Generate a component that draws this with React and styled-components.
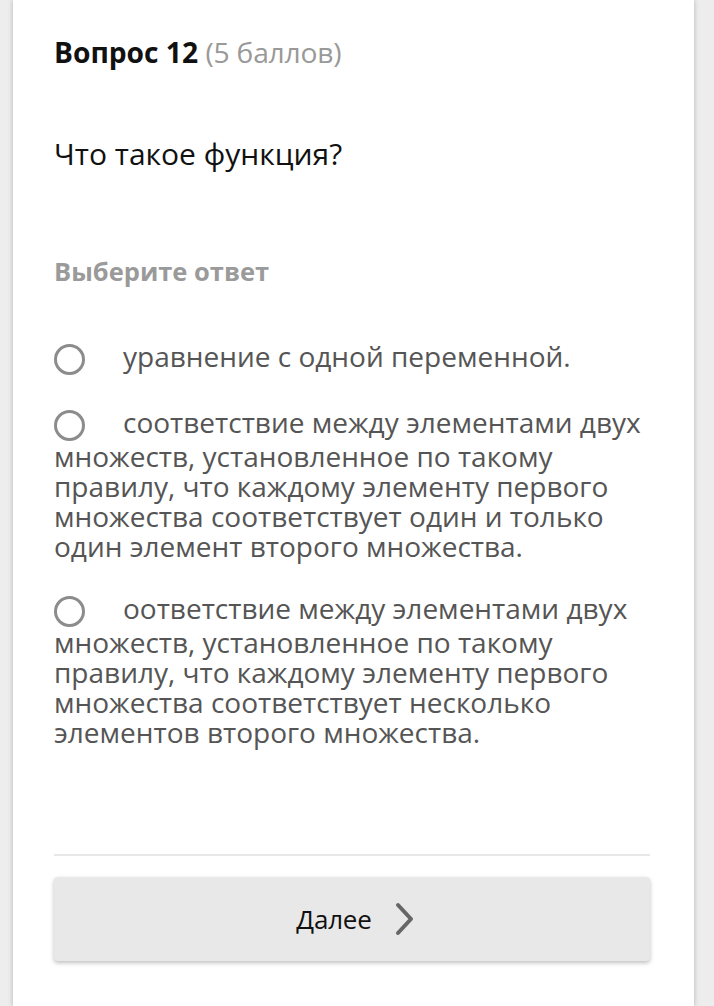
import React from "react";
import styled, { createGlobalStyle } from "styled-components";

const Global = createGlobalStyle`
  html, body { margin: 0; padding: 0; background: #ededed; }
  body { font-family: "Open Sans", "Noto Sans", sans-serif; }
`;

const Page = styled.div`
  display: flex;
  justify-content: flex-start;
  min-height: 1006px;
  padding-left: 13px;
`;

const Card = styled.div`
  width: 681px;
  background: #fff;
  box-shadow: 0 0 5px rgba(0,0,0,0.25);
  padding: 30px 44px 40px 41px;
  box-sizing: border-box;
  min-height: 1006px;
`;

const Title = styled.h2`
  margin: 0;
  font-size: 28.2px;
  font-weight: 700;
  color: #111;
  line-height: 44px;
`;

const Points = styled.span`
  font-weight: 400;
  color: #999;
  letter-spacing: -0.2px;
`;

const Question = styled.p`
  margin: 58px 0 0;
  font-size: 30px;
  color: #111;
  line-height: 44px;
`;

const Hint = styled.div`
  margin-top: 80px;
  font-size: 25.5px;
  font-weight: 700;
  color: #9a9a9a;
  line-height: 30px;
`;

const Options = styled.div`
  margin-top: 55px;
  display: flex;
  flex-direction: column;
  gap: 32px;
`;

const Option = styled.label`
  display: block;
  font-size: 28px;
  line-height: 30px;
  color: #555;
`;

const Radio = styled.span`
  display: inline-block;
  width: 25px;
  height: 25px;
  border: 3px solid #8c8c8c;
  border-radius: 50%;
  vertical-align: -8px;
  margin-right: 38px;
  box-sizing: content-box;
`;

const Divider = styled.hr`
  margin: 107px 0 0;
  border: none;
  border-top: 2px solid #e8e8e8;
`;

const NextButton = styled.button`
  margin-top: 21px;
  width: 100%;
  height: 84px;
  background: #e8e8e8;
  border: none;
  border-radius: 4px;
  box-shadow: 0 2px 4px rgba(0,0,0,0.25);
  display: flex;
  align-items: center;
  justify-content: center;
  gap: 22px;
  padding: 0 0 0 8px;
  font-family: "Open Sans", sans-serif;
  font-size: 26px;
  letter-spacing: -0.2px;
  color: #111;
`;

const options = [
  "уравнение с одной переменной.",
  "соответствие между элементами двух множеств, установленное по такому правилу, что каждому элементу первого множества соответствует один и только один элемент второго множества.",
  "оответствие между элементами двух множеств, установленное по такому правилу, что каждому элементу первого множества соответствует несколько элементов второго множества.",
];

export default function App() {
  return (
    <>
      <Global />
      <Page>
        <Card>
          <Title>
            Вопрос 12 <Points>(5 баллов)</Points>
          </Title>
          <Question>Что такое функция?</Question>
          <Hint>Выберите ответ</Hint>
          <Options>
            {options.map((t, i) => (
              <Option key={i}>
                <Radio />
                {t}
              </Option>
            ))}
          </Options>
          <Divider />
          <NextButton>
            Далее
            <svg width="22" height="34" viewBox="0 0 22 34">
              <path d="M4 3 L17 17 L4 31" fill="none" stroke="#666" strokeWidth="4" strokeLinecap="round" strokeLinejoin="round" />
            </svg>
          </NextButton>
        </Card>
      </Page>
    </>
  );
}
